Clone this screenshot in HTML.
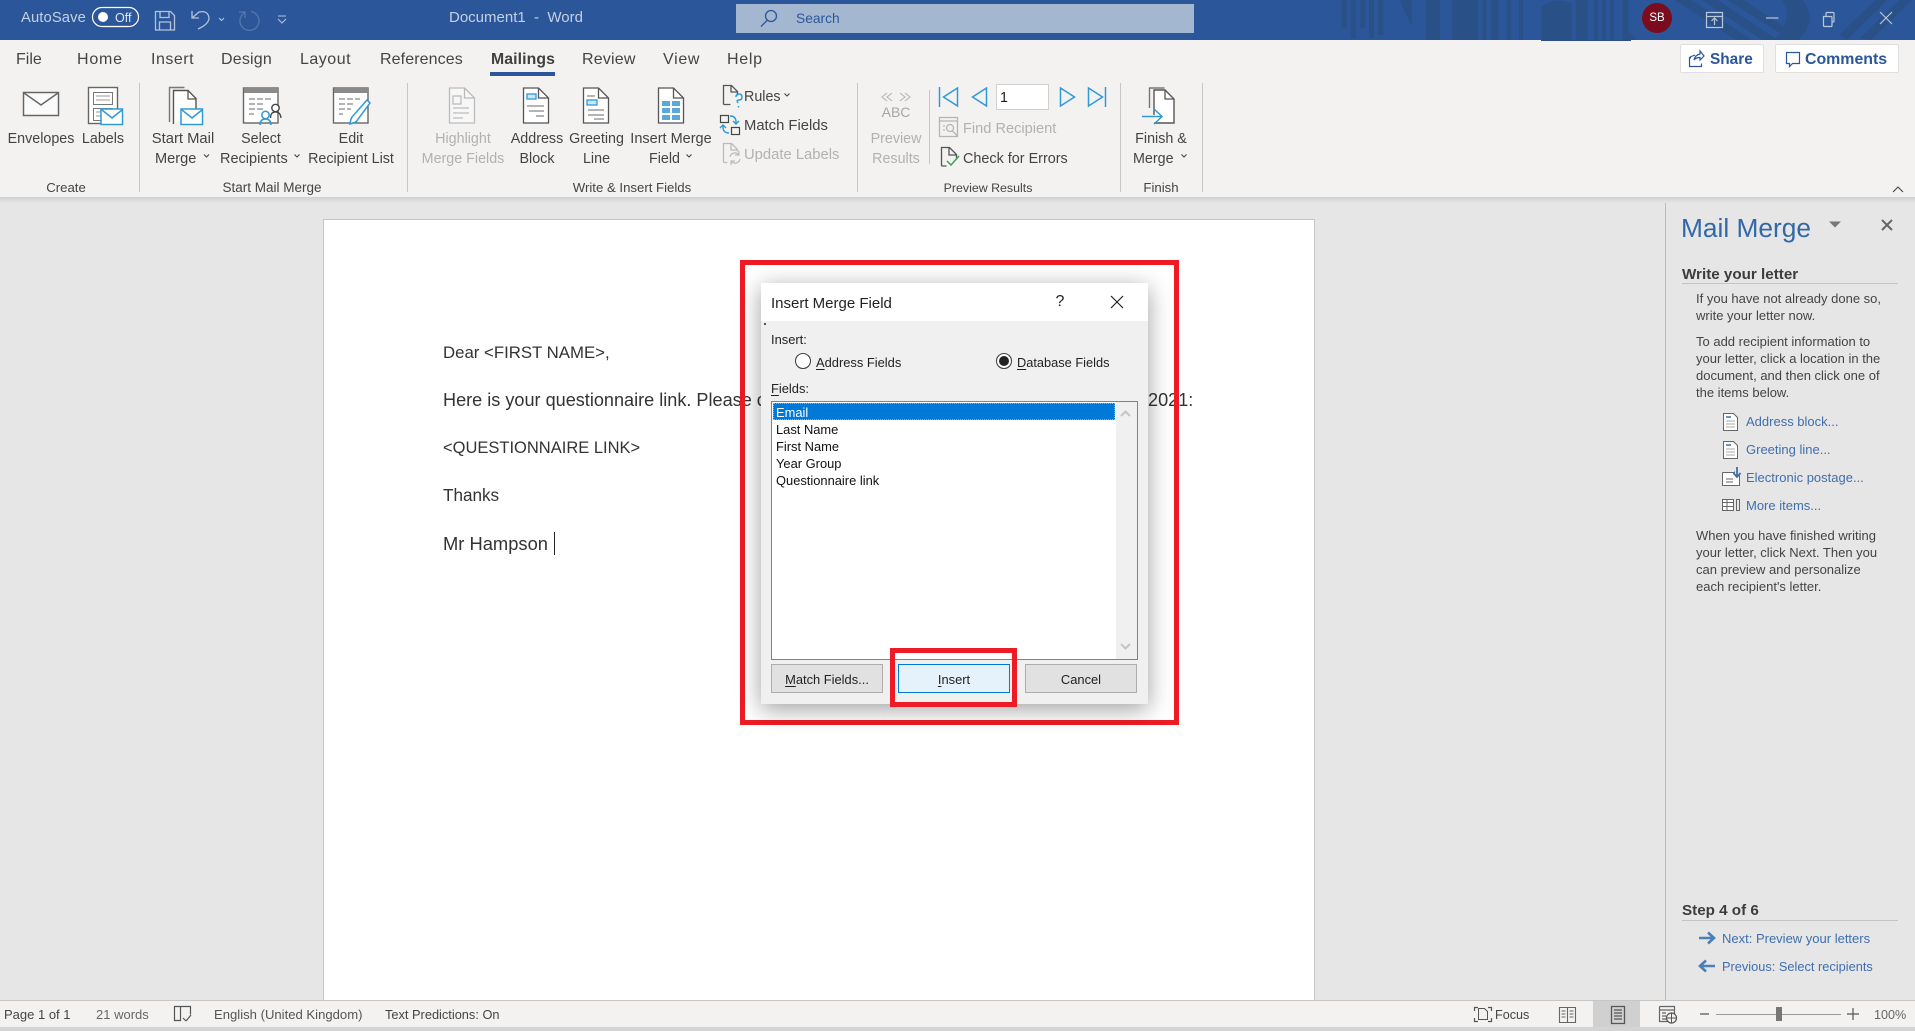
<!DOCTYPE html>
<html lang="en"><head><meta charset="utf-8"><title>Document1 - Word</title>
<style>
html,body{margin:0;padding:0;width:1915px;height:1031px;overflow:hidden;background:#e6e6e6;font-family:"Liberation Sans",sans-serif;color:#444}
div,span,a{position:absolute}
.t{white-space:nowrap;line-height:20px;height:20px;margin-top:1px}
.t.n{margin-top:0}
.c{transform:translateX(-50%)}
.tab{font-size:16px;color:#444;letter-spacing:.2px}
.r{font-size:14.3px;color:#444}
.d{color:#b1b1b1}
.g{font-size:13.2px;color:#444}
.tb{font-size:15px;color:#c3d0e4}
.p{font-size:13px;color:#444;left:1696px;margin-top:0}
.l{font-size:13px;color:#3f6fae;margin-top:0}
.s{font-size:13px;color:#444}
.doc{font-size:16.8px;color:#333;left:443px}
.dl{font-size:12.9px;color:#222}
.li{font-size:12.9px;color:#111;left:776px}
.btn{box-sizing:border-box;height:29px;top:664px;width:112px;text-align:center;line-height:29px;font-size:12.9px;color:#222;background:#e1e1e1;border:1px solid #adadad}
u{text-underline-offset:2px}
svg{position:absolute;left:0;top:0}
</style></head><body>
<div style="left:0;top:0;width:1915px;height:40px;background:#2b579a"></div>
<div style="left:0;top:40px;width:1915px;height:157px;background:#f3f2f1"></div>
<div style="left:0;top:197px;width:1915px;height:6px;background:linear-gradient(#d0d0d0,#e6e6e6)"></div>
<div style="left:736px;top:4px;width:458px;height:29px;background:#a4b7d0"></div>
<div style="left:1680px;top:44px;width:84px;height:29px;background:#fff;border:1px solid #e1dfdd;box-sizing:border-box;border-radius:2px"></div>
<div style="left:1775px;top:44px;width:124px;height:29px;background:#fff;border:1px solid #e1dfdd;box-sizing:border-box;border-radius:2px"></div>
<div style="left:996px;top:84px;width:53px;height:26px;background:#fff;border:1px solid #d0d0d0;box-sizing:border-box"></div>
<div style="left:324px;top:220px;width:990px;height:781px;background:#fff;box-shadow:0 0 0 1px #c6c6c6"></div>
<div style="left:1665px;top:203px;width:1px;height:797px;background:#bdbdbd"></div>
<div style="left:0;top:1000px;width:1915px;height:27px;background:#f3f2f1;border-top:1px solid #c8c6c4;box-sizing:border-box"></div>
<div style="left:0;top:1027px;width:1915px;height:4px;background:#d4d4d4"></div>
<div style="left:1593px;top:1001px;width:47px;height:26px;background:#d0d0d0"></div>

<span class="t n" style="left:21px;top:8px;font-size:14.8px;color:#c3d0e4;letter-spacing:.1px">AutoSave</span>
<span class="t n" style="left:115px;top:8px;font-size:12.5px;color:#dfe6f1">Off</span>
<span class="t tb n" style="left:449px;top:8px">Document1&nbsp; - &nbsp;Word</span>
<span class="t" style="left:796px;top:8px;font-size:13.8px;color:#2b579a">Search</span>

<span class="t tab" style="left:16px;top:48.500px;letter-spacing:0">File</span>
<span class="t tab" style="left:77px;top:48.500px;letter-spacing:.8px">Home</span>
<span class="t tab" style="left:151px;top:48.500px;letter-spacing:.5px">Insert</span>
<span class="t tab" style="left:221px;top:48.500px">Design</span>
<span class="t tab" style="left:300px;top:48.500px;letter-spacing:.5px">Layout</span>
<span class="t tab" style="left:380px;top:48.500px;letter-spacing:.1px">References</span>
<span class="t tab" style="left:491px;top:48.500px;font-weight:bold;color:#404040;font-size:15.8px;letter-spacing:.1px">Mailings</span>
<span class="t tab" style="left:582px;top:48.500px">Review</span>
<span class="t tab" style="left:663px;top:48.500px;letter-spacing:.7px">View</span>
<span class="t tab" style="left:727px;top:48.500px;letter-spacing:.7px">Help</span>
<div style="left:490px;top:72px;width:65px;height:4px;background:#2b579a"></div>
<span class="t" style="left:1710px;top:49px;font-size:15.4px;font-weight:bold;color:#2b579a">Share</span>
<span class="t" style="left:1805px;top:49px;font-size:15.9px;font-weight:bold;color:#2b579a">Comments</span>

<span class="t r c" style="left:41px;top:128px">Envelopes</span>
<span class="t r c" style="left:103px;top:128px">Labels</span>
<span class="t r c" style="left:183px;top:128px;font-size:14.8px">Start Mail</span>
<span class="t r" style="left:155px;top:148px;font-size:14.6px">Merge</span>
<span class="t r c" style="left:261px;top:128px">Select</span>
<span class="t r" style="left:220px;top:148px;font-size:14.5px">Recipients</span>
<span class="t r c" style="left:351px;top:128px">Edit</span>
<span class="t r c" style="left:351px;top:148px">Recipient List</span>
<span class="t r c d" style="left:463px;top:128px">Highlight</span>
<span class="t r c d" style="left:463px;top:148px">Merge Fields</span>
<span class="t r c" style="left:537px;top:128px">Address</span>
<span class="t r c" style="left:537px;top:148px">Block</span>
<span class="t r c" style="left:596.500px;top:128px">Greeting</span>
<span class="t r c" style="left:596.500px;top:148px">Line</span>
<span class="t r c" style="left:671px;top:128px;font-size:14.5px">Insert Merge</span>
<span class="t r" style="left:649px;top:148px">Field</span>
<span class="t r" style="left:744px;top:86px">Rules</span>
<span class="t r" style="left:744px;top:115px;font-size:14.8px">Match Fields</span>
<span class="t r d" style="left:744px;top:144px;font-size:14.8px">Update Labels</span>
<span class="t c n" style="left:896px;top:102px;font-size:14px;color:#a6a6a6">ABC</span>
<span class="t r c d" style="left:896px;top:128px">Preview</span>
<span class="t r c d" style="left:896px;top:148px">Results</span>
<span class="t" style="left:1000px;top:87px;font-size:14.3px;color:#222">1</span>
<span class="t r d" style="left:963px;top:118px;font-size:14.6px">Find Recipient</span>
<span class="t r" style="left:963px;top:148px;font-size:14.4px">Check for Errors</span>
<span class="t r c" style="left:1161px;top:128px">Finish &amp;</span>
<span class="t r" style="left:1133px;top:148px">Merge</span>
<span class="t g c n" style="left:66px;top:178px">Create</span>
<span class="t g c n" style="left:272px;top:178px;font-size:13.5px">Start Mail Merge</span>
<span class="t g c n" style="left:632px;top:178px">Write &amp; Insert Fields</span>
<span class="t g c n" style="left:988px;top:178px;font-size:12.4px">Preview Results</span>
<span class="t g c n" style="left:1161px;top:178px">Finish</span>

<span class="t doc" style="top:342px">Dear &lt;FIRST NAME&gt;,</span>
<span class="t doc" style="top:389px;font-size:18.1px">Here is your questionnaire link. Please complete it</span>
<span class="t doc" style="left:1148px;top:389px;font-size:18.1px">2021:</span>
<span class="t doc" style="top:437px;font-size:16.5px">&lt;QUESTIONNAIRE LINK&gt;</span>
<span class="t doc" style="top:485px;font-size:17.1px">Thanks</span>
<span class="t doc" style="top:533px;font-size:18.35px">Mr Hampson</span>
<div style="left:554px;top:532px;width:1px;height:23px;background:#222"></div>

<span class="t n" style="left:1681px;top:213px;font-size:26.3px;height:30px;line-height:30px;color:#3368a8">Mail Merge</span>
<span class="t n" style="left:1682px;top:265px;font-size:15.2px;font-weight:bold;color:#3c3c3c">Write your letter</span>
<div style="left:1682px;top:283px;width:216px;height:1px;background:#c4c4c4"></div>
<span class="t p" style="top:289px">If you have not already done so,</span>
<span class="t p" style="top:306px">write your letter now.</span>
<span class="t p" style="top:332px">To add recipient information to</span>
<span class="t p" style="top:349px">your letter, click a location in the</span>
<span class="t p" style="top:366px">document, and then click one of</span>
<span class="t p" style="top:383px">the items below.</span>
<span class="t l" style="left:1746px;top:412px">Address block...</span>
<span class="t l" style="left:1746px;top:440px">Greeting line...</span>
<span class="t l" style="left:1746px;top:468px">Electronic postage...</span>
<span class="t l" style="left:1746px;top:496px">More items...</span>
<span class="t p" style="top:526px">When you have finished writing</span>
<span class="t p" style="top:543px">your letter, click Next. Then you</span>
<span class="t p" style="top:560px">can preview and personalize</span>
<span class="t p" style="top:577px">each recipient's letter.</span>
<span class="t n" style="left:1682px;top:901px;font-size:15.2px;font-weight:bold;color:#3c3c3c">Step 4 of 6</span>
<div style="left:1682px;top:920px;width:216px;height:1px;background:#c4c4c4"></div>
<span class="t l" style="left:1722px;top:929px">Next: Preview your letters</span>
<span class="t l" style="left:1722px;top:957px;font-size:12.8px">Previous: Select recipients</span>

<span class="t s" style="left:4px;top:1004px">Page 1 of 1</span>
<span class="t s" style="left:96px;top:1004px;color:#666">21 words</span>
<span class="t s" style="left:214px;top:1004px;color:#555;font-size:13.1px">English (United Kingdom)</span>
<span class="t s" style="left:385px;top:1004px;font-size:12.8px">Text Predictions: On</span>
<span class="t s" style="left:1495px;top:1004px;font-size:12.6px">Focus</span>
<span class="t s" style="left:1874px;top:1004px;color:#666;font-size:12.6px">100%</span>

<svg width="1915" height="1031" viewBox="0 0 1915 1031" fill="none">
<!-- title bar decoration -->
<g transform="translate(1280,0) scale(.405,.3333)" fill="#2a5088">
<rect x="152" y="0" width="13" height="85"/><rect x="175" y="0" width="13" height="115"/><rect x="198" y="0" width="13" height="85"/><rect x="220" y="0" width="12" height="115"/><rect x="242" y="0" width="13" height="105"/>
<path d="M295 0h30v80zM360 0h35v120h-35zM425 0h65v120h-65zM500 0h10v120h-10zM520 0h20v120h-20zM560 0h10v120h-10zM590 0h10v120h-10z"/>
<path d="M645 20q30-30 75-10v110h-75zM730 0h30v120h-30zM775 0h10v120h-10zM795 0h10v120h-10zM815 0h10v120h-10zM845 0h15v90l20 30h-35z"/>
<path d="M975 0h40l150 120h-40zM1040 0h40l150 120h-40zM1105 0h40l130 105-15 15zM1240 0h50q40 60-10 120h-60q50-60 20-120z"/>
<path d="M1380 105l90-105h30l-100 120zM1430 115l100-115h30l-100 120z"/>
</g>
<rect x="1541" y="40" width="90" height="1" fill="#2a5088"/>
<!-- titlebar icons -->
<rect x="92.500" y="7.500" width="46" height="19" rx="9.500" stroke="#fff" stroke-width="1.200"/>
<circle cx="103" cy="17" r="5" fill="#fff"/>
<g stroke="#b3c3da" stroke-width="1.300">
<path d="M155.500 11.500h15l4 4v14.500h-19zM160 11.500v6h9v-6M159.500 30v-8h11v8"/>
<path d="M192 11v7h7M192 18l7-6q9-2 10 6 0 6-11 11"/>
</g>
<path d="M219 18l2.500 2.500 2.500-2.500M278 16h8M278 19l4 4 4-4" stroke="#b3c3da" stroke-width="1.100"/>
<path d="M245 12.500a9.500 9.500 0 1 0 6-1M239 12h6v6" stroke="#5377ad" stroke-width="1.300"/>
<circle cx="771" cy="16" r="5.500" stroke="#2b579a" stroke-width="1.300"/><path d="M767 20.500l-6 6" stroke="#2b579a" stroke-width="1.300"/>
<circle cx="1657" cy="18" r="15" fill="#7a0c1e"/>
<g stroke="#b9c7dc" stroke-width="1.200">
<path d="M1706.500 12.500h16v15h-16zM1706.500 16.500h16M1714.500 25v-7M1711.500 21l3-3 3 3"/>
<path d="M1766 18h12.500"/>
<path d="M1823.500 16.500h7.500a1 1 0 0 1 1 1v8a1 1 0 0 1-1 1h-6.500a1 1 0 0 1-1-1zM1826 16v-2.500a1 1 0 0 1 1-1h6a1 1 0 0 1 1 1v7.500a1 1 0 0 1-1 1h-1"/>
<path d="M1880 12l12 12M1892 12l-12 12"/>
</g>
<!-- share/comment icons -->
<path d="M1690.500 58.500v-1h-1v9h12v-3M1694 60q1-5 6-6v-3l4 5-4 4v-2.500q-4 0-6 2.500zM1690 57l5-2" stroke="#2b579a" stroke-width="1.200"/>
<path d="M1786.500 52.500h13v11h-7l-3 3v-3h-3z" stroke="#2b579a" stroke-width="1.200"/>
<!-- separators -->
<g fill="#c8c6c4"><rect x="139" y="83" width="1" height="109"/><rect x="407" y="83" width="1" height="109"/><rect x="857" y="83" width="1" height="109"/><rect x="1120" y="83" width="1" height="109"/><rect x="1202" y="83" width="1" height="109"/><rect x="929" y="90" width="1" height="74"/></g>
<!-- envelope -->
<rect x="23.500" y="92.500" width="35" height="23" fill="#fafafa" stroke="#666" stroke-width="1.500"/><path d="M24 93l17 12 17-12" stroke="#666" stroke-width="1.500"/>
<!-- labels -->
<rect x="88.500" y="87.500" width="29" height="36" fill="#fff" stroke="#666" stroke-width="1.400"/>
<rect x="93.500" y="92.500" width="19" height="12" stroke="#777"/><rect x="93.500" y="108.500" width="19" height="12" stroke="#777"/><path d="M96 96h14M96 100h14M96 112h8M96 116h8" stroke="#999"/>
<rect x="101" y="109" width="21.500" height="15.500" fill="#fff" stroke="#2e9ad6" stroke-width="1.500"/><path d="M102 110l10 8 10-8" stroke="#2e9ad6" stroke-width="1.500"/>
<!-- start mail merge -->
<path d="M169.500 122V87.500h15" stroke="#777" stroke-width="1.400"/><path d="M173.500 124V90.500h14.500l8 8V110" fill="#fff" stroke="#555" stroke-width="1.400"/><path d="M188 91v8h8" stroke="#555" stroke-width="1.300"/>
<rect x="181" y="109" width="21.500" height="15.500" fill="#fff" stroke="#2e9ad6" stroke-width="1.500"/><path d="M182 110l10 8 10-8" stroke="#2e9ad6" stroke-width="1.500"/>
<!-- select recipients -->
<rect x="243.500" y="88" width="34.500" height="35" fill="#fff" stroke="#666" stroke-width="1.400"/><rect x="244" y="88" width="34" height="5" fill="#8a8a8a"/>
<path d="M249 99h6M257 99h6M265 99h6M249 104h6M257 104h6M249 109h6M257 109h6M249 114h5" stroke="#888" stroke-width="1.200"/>
<circle cx="265.500" cy="115" r="3.700" stroke="#2e9ad6" stroke-width="1.500" fill="#fff"/><path d="M260 125q0-6 5.500-6t5.500 6" stroke="#2e9ad6" stroke-width="1.500"/>
<circle cx="275.500" cy="108" r="3.700" stroke="#444" stroke-width="1.400" fill="#fff"/><path d="M270.500 118q0-6 5-6t5.500 6" stroke="#444" stroke-width="1.300"/>
<!-- edit list -->
<rect x="333.500" y="88" width="34.500" height="35" fill="#fff" stroke="#666" stroke-width="1.400"/><rect x="334" y="88" width="34" height="5" fill="#8a8a8a"/>
<path d="M339 99h6M347 99h6M355 99h5M339 104h6M347 104h6M339 109h6M347 109h4M339 114h4" stroke="#888" stroke-width="1.200"/>
<path d="M351 119l1-2 15-17 3 3-14 19-6 2z" fill="#fff" stroke="#2e9ad6" stroke-width="1.500"/>
<!-- documents -->
<g stroke="#bbb" stroke-width="1.300" fill="#f7f7f7"><path d="M449.500 88h15l10 10v25h-25z"/><path d="M464.500 88v10h10" fill="none"/><rect x="453" y="96" width="8" height="8" fill="none"/><path d="M453 108h16M453 113h16M453 118h10" fill="none"/></g>
<g stroke="#555" stroke-width="1.300" fill="#fff"><path d="M523.500 88h15l10 10v25h-25z"/><path d="M538.500 88v10h10" fill="none"/><path d="M527 106h17M529 111h15M536 116h8" fill="none" stroke="#888"/></g>
<rect x="527" y="94" width="9" height="5" fill="#cde6f6" stroke="#2e9ad6" stroke-width="1.300"/>
<g stroke="#555" stroke-width="1.300" fill="#fff"><path d="M583.500 88h15l10 10v25h-25z"/><path d="M598.500 88v10h10" fill="none"/><path d="M587 96h8M588 110h16M588 115h16M594 119h10" fill="none" stroke="#888"/></g>
<rect x="587" y="100" width="10" height="5" fill="#cde6f6" stroke="#2e9ad6" stroke-width="1.300"/>
<g stroke="#555" stroke-width="1.300" fill="#fff"><path d="M658.500 88h15l10 10v25h-25z"/><path d="M673.500 88v10h10" fill="none"/></g>
<g fill="#5aa9dd"><rect x="662" y="101" width="8" height="5"/><rect x="672" y="101" width="8" height="5"/><rect x="662" y="108" width="8" height="5"/><rect x="672" y="108" width="8" height="5"/><rect x="662" y="115" width="8" height="5"/><rect x="672" y="115" width="8" height="5"/></g>
<!-- chevrons -->
<g stroke="#444" stroke-width="1.100"><path d="M204 154.500l2.500 2.500 2.500-2.500M294.500 154.500l2.500 2.500 2.500-2.500M686.500 154.500l2.500 2.500 2.500-2.500M784.500 93.500l2.500 2.500 2.500-2.500M1181.500 154.500l2.500 2.500 2.500-2.500M1893 192l5-5 5 5" /></g>
<!-- rules -->
<path d="M723.500 104.500V85.500h8l6 6v4M731 86v6h6M723.500 104.500h7" stroke="#555" stroke-width="1.300" fill="none"/>
<path d="M736 97q0-3 3-3t3 3-3 3-1 3M738.500 106v1.500" stroke="#2e9ad6" stroke-width="1.500"/>
<!-- match fields -->
<rect x="720.500" y="115.500" width="8" height="7" stroke="#444" stroke-width="1.200"/><rect x="731.500" y="127.500" width="8" height="7" stroke="#444" stroke-width="1.200"/>
<path d="M730 116q6 0 6 6v2M733 121l3 3 3-3M729 133q-6 0-6-6v-2M720 128l3-3 3 3" stroke="#2e9ad6" stroke-width="1.400"/>
<!-- update labels -->
<path d="M723.500 162.500V143.500h8l6 6v2M731 144v6h6M723.500 162.500h4" stroke="#bbb" stroke-width="1.300"/>
<path d="M730 157a5 5 0 0 1 9-2M740 159a5 5 0 0 1-9 2M739 151v4h-4M731 165v-4h4" stroke="#bbb" stroke-width="1.200"/>
<!-- abc arrows -->
<path d="M887 93l-5 4 5 4M892 93l-5 4 5 4M900 93l5 4-5 4M905 93l5 4-5 4" stroke="#b5b5b5" stroke-width="1.100"/>
<!-- nav -->
<g stroke="#2e9ad6" stroke-width="1.500"><path d="M939.500 87v20M957.500 88v18l-14-9zM986.500 88v18l-14-9zM1060.500 88v18l14-9zM1088.500 88v18l14-9zM1105.500 87v20"/></g>
<!-- find recipient -->
<g stroke="#b5b5b5" stroke-width="1.300"><rect x="939.500" y="117.500" width="18" height="19"/><path d="M940 121h17M943 126h2M943 130h2"/><circle cx="950" cy="128" r="3.500"/><path d="M952.500 131l5 5"/></g>
<!-- check for errors -->
<path d="M941.500 166V147.500h8l7 7v5M949 148v7h7M941.500 166h5" stroke="#555" stroke-width="1.300"/>
<path d="M947 161l4 4 8-9" stroke="#3aa655" stroke-width="1.500"/>
<!-- finish -->
<path d="M1149.500 108V88h15" stroke="#777" stroke-width="1.400"/><path d="M1154 123h20V99l-9-9h-11v25" fill="#fff" stroke="#555" stroke-width="1.400"/><path d="M1165 90v9h9" stroke="#555" stroke-width="1.300"/>
<path d="M1142 116.500h19M1154 109l8 7.500-8 7.500" stroke="#2e9ad6" stroke-width="1.500"/>
<!-- pane -->
<path d="M1829 221.500h12l-6 6z" fill="#777"/>
<path d="M1882 220l10 10M1892 220l-10 10" stroke="#666" stroke-width="2"/>
<g stroke="#666" stroke-width="1" fill="#fff"><path d="M1723.500 413.500h10l4 4v13h-14z"/><path d="M1723.500 441.500h10l4 4v13h-14z"/></g>
<path d="M1726 417h5M1726 445h5" stroke="#3f6fae" stroke-width="1.500"/>
<path d="M1726 421h9M1726 424h9M1726 427h9M1726 449h9M1726 452h9M1726 455h9" stroke="#aaa"/>
<path d="M1722.500 472.500h12v-1M1722.500 472.500v13h17v-12M1726 479h7M1726 482h7" stroke="#666" fill="#fff"/>
<path d="M1737 467v9M1733.500 473l3.500 4 3.500-4" stroke="#3f6fae" stroke-width="1.800"/>
<g stroke="#666"><rect x="1722.500" y="499.500" width="11" height="11" fill="#fff"/><path d="M1723 502.500h10M1723 506.500h10M1727 500v10"/><rect x="1736.500" y="499.500" width="3" height="11"/></g>
<path d="M1699 938h13M1708 932.500l6 5.500-6 5.500" stroke="#4a7fb8" stroke-width="2.600"/>
<path d="M1715 966h-13M1706 960.500l-6 5.500 6 5.500" stroke="#4a7fb8" stroke-width="2.600"/>
<!-- status icons -->
<path d="M174.500 1006.500h6v14h-6zM180.500 1006.500h10v8M186 1021l-3-3M186 1021l5-6M180.500 1006.500v14" stroke="#555" stroke-width="1.200"/>
<path d="M1474.500 1011v-3.500h3.500M1488 1007.500h3.500v3.500M1491.500 1018v3.500H1488M1478 1021.500h-3.500V1018" stroke="#555" stroke-width="1.200"/><path d="M1478.500 1019.500V1008.500h6l3 3v8z" stroke="#555"/>
<path d="M1559.500 1007.500h8v15h-8zM1567.500 1007.500h8v15h-8zM1561.500 1011h4M1561.500 1014h4M1561.500 1017h4M1569.500 1011h4M1569.500 1014h4M1569.500 1017h4" stroke="#666" stroke-width="1.100"/>
<path d="M1611.500 1006.500h13v17h-13z" stroke="#555" stroke-width="1.300"/><path d="M1614 1010h8M1614 1013h8M1614 1016h8M1614 1019h8" stroke="#555" stroke-width="1.200"/>
<path d="M1659.500 1006.500h15v8M1659.500 1006.500v15h8M1659.500 1010h15M1662 1013h4M1662 1016h4M1662 1019h4" stroke="#666" stroke-width="1.200"/>
<circle cx="1671.500" cy="1018" r="5" stroke="#555" stroke-width="1.200"/><path d="M1666.500 1018h10M1671.500 1013v10" stroke="#555"/>
<path d="M1700 1014h9M1847 1014h12M1853 1008v12" stroke="#555" stroke-width="1.200"/>
<rect x="1716" y="1014" width="125" height="1" fill="#999"/><rect x="1776" y="1007" width="6" height="14" fill="#777"/>
</svg>
<span class="t c n" style="left:1657px;top:8px;font-size:11.5px;color:#fff">SB</span>

<!-- red box -->
<div style="left:740px;top:260px;width:439px;height:465px;box-sizing:border-box;border:5px solid #ed1c24"></div>

<!-- dialog -->
<div style="left:761px;top:283px;width:387px;height:421px;background:#f0f0f0;box-shadow:0 5px 22px rgba(0,0,0,.38)">
<div style="left:0;top:0;width:387px;height:38px;background:#fff"></div>
<div style="left:3px;top:40px;width:2px;height:2px;background:#555"></div>
</div>
<span class="t" style="left:771px;top:293px;font-size:15px;color:#222">Insert Merge Field</span>
<span class="t c" style="left:1060px;top:291px;font-size:16px;color:#222">?</span>
<span class="t dl" style="left:771px;top:329px">Insert:</span>
<span class="t dl" style="left:816px;top:352px"><u>A</u>ddress Fields</span>
<span class="t dl" style="left:1017px;top:352px;font-size:12.8px"><u>D</u>atabase Fields</span>
<span class="t dl" style="left:771px;top:378px"><u>F</u>ields:</span>
<div style="left:771px;top:401px;width:367px;height:259px;box-sizing:border-box;background:#fff;border:1px solid #82828a"></div>
<div style="left:1116px;top:402px;width:21px;height:257px;background:#f0f0f0"></div>
<div style="left:773px;top:403px;width:342px;height:17px;background:#0078d7;outline:1px dotted #c9a86a;outline-offset:-1px"></div>
<span class="t li" style="top:402px;color:#fff">Email</span>
<span class="t li" style="top:419px">Last Name</span>
<span class="t li" style="top:436px">First Name</span>
<span class="t li" style="top:453px">Year Group</span>
<span class="t li" style="top:470px">Questionnaire link</span>
<div class="btn" style="left:771px"><u>M</u>atch Fields...</div>
<div class="btn" style="left:898px;background:#e5f1fb;border-color:#0078d7"><u>I</u>nsert</div>
<div class="btn" style="left:1025px">Cancel</div>
<svg width="1915" height="1031" viewBox="0 0 1915 1031" fill="none">
<path d="M1111 296l12 12M1123 296l-12 12" stroke="#222" stroke-width="1.200"/>
<circle cx="803" cy="361" r="7.500" fill="#fff" stroke="#444" stroke-width="1.100"/>
<circle cx="1004" cy="361" r="7.500" fill="#fff" stroke="#444" stroke-width="1.100"/><circle cx="1004" cy="361" r="5" fill="#222"/>
<path d="M1121 416l4.500-4.500 4.500 4.500M1121 644l4.500 4.500 4.500-4.500" stroke="#c4c4c4" stroke-width="2"/>
</svg>
<div style="left:890px;top:648px;width:127px;height:59px;box-sizing:border-box;border:5px solid #ed1c24"></div>
</body></html>
